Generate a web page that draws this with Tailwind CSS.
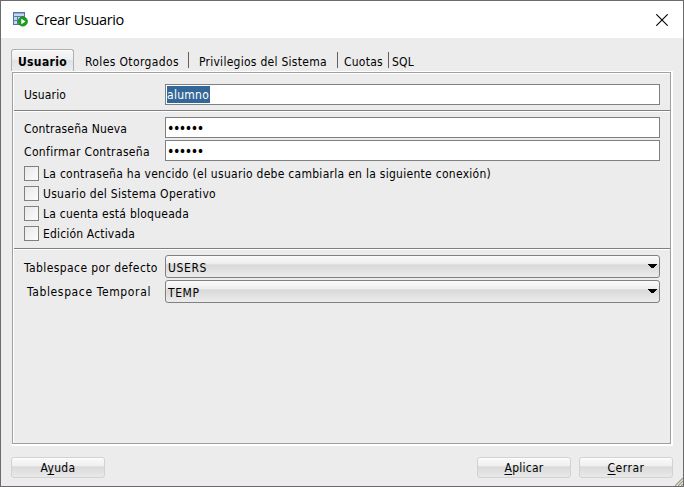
<!DOCTYPE html>
<html lang="es">
<head>
<meta charset="utf-8">
<title>Crear Usuario</title>
<script src="https://cdn.jsdelivr.net/npm/@tailwindcss/browser@4"></script>
</head>
<body class="overflow-hidden">
<div class="relative flex h-[487px] w-[684px] flex-col border border-[#6c6a6c] bg-[#ececec] font-['DejaVu_Sans_Condensed','DejaVu_Sans',sans-serif] text-[12px] leading-[14px] whitespace-nowrap text-black">

  <header class="flex h-[37px] shrink-0 items-center bg-white pl-3 pr-[15px]">
    <svg class="h-4 w-4 shrink-0" viewBox="0 0 16 16">
      <rect x=".5" y=".5" width="11" height="12" fill="#c3d7f0" stroke="#5474a6"/>
      <path d="M1 1.5h10" stroke="#8faedb"/>
      <path d="M0 4.5h12M0 8.5h12M4.5 4v9" stroke="#5b7bad"/>
      <circle cx="9.8" cy="9.5" r="4.6" fill="#1fa01c" stroke="#0e7d12" stroke-width=".8"/>
      <path d="M8.3 6.8v5.4l4.2-2.7z" fill="#fff"/>
    </svg>
    <h1 class="ml-[6px] flex-1 font-['Open_Sans',sans-serif] text-[14.5px] leading-5 tracking-[-0.37px]">Crear Usuario</h1>
    <svg class="h-3 w-3" viewBox="0 0 12 12"><path d="M.3.3l11.4 11.4M11.7.3L.3 11.7" stroke="#000" stroke-width="1.1"/></svg>
  </header>

  <nav class="mt-[11px] ml-[10px] flex h-[22px] shrink-0">
    <div class="flex w-[63px] justify-center rounded-t-[3px] border border-b-0 border-[#aeb0b2] bg-[linear-gradient(#f8f8f8,#efefef_45%,#dfe2e6_50%,#ececec)] pt-[5px] font-bold tracking-[0.35px] shadow-[inset_0_1px_#fff]">Usuario</div>
    <div class="ml-[11px] pt-[6px] tracking-[0.37px]">Roles Otorgados</div>
    <div class="absolute top-[51px] left-[187px] h-4 w-px bg-[#606060]"></div>
    <div class="absolute top-[51px] left-[336px] h-4 w-px bg-[#606060]"></div>
    <div class="absolute top-[51px] left-[387px] h-4 w-px bg-[#606060]"></div>
    <div class="ml-[20px] w-[145px] pt-[6px] tracking-[0.27px]">Privilegios del Sistema</div>
    <div class="w-12 pt-[6px] tracking-[0.25px]">Cuotas</div>
    <div class="pt-[6px] tracking-[0.2px]">SQL</div>
  </nav>

  <main class="ml-[10px] h-[375px] w-[662px] shrink-0 border border-r-2 border-b-2 border-white border-l-[#ececec]">
    <div class="h-[372px] w-[659px] border border-[#a0a0a0]">
      <div class="flex h-full flex-col border-t border-l border-white">
        <div class="mt-[10px] flex h-[21px] pl-[10px]">
          <div class="w-[141px] pt-1 tracking-[0.15px]">Usuario</div>
          <div class="h-[21px] w-[495px] border border-[#808080] bg-white py-px pl-px"><span class="flex h-[17px] w-[43px] items-center bg-[#336699] pt-px tracking-[0.27px] text-white">alumno</span></div>
        </div>
        <div class="mt-[5px] h-[2px] shrink-0 border-t border-b border-t-[#808080] border-b-white"></div>

        <div class="mt-[5px] flex h-[21px] pl-[10px]">
          <div class="w-[141px] pt-[5px] tracking-[0.2px]">Contraseña Nueva</div>
          <div class="h-[21px] w-[495px] border border-[#808080] bg-white pt-[3px] pl-px text-[14px] tracking-[-1.5px]">••••••</div>
        </div>
        <div class="mt-[2px] flex h-[21px] pl-[10px]">
          <div class="w-[141px] pt-[5px] tracking-[0.35px]">Confirmar Contraseña</div>
          <div class="h-[21px] w-[495px] border border-[#808080] bg-white pt-[3px] pl-px text-[14px] tracking-[-1.5px]">••••••</div>
        </div>

        <div class="mt-[5px] flex flex-col gap-[5px] pl-[10px]">
          <div class="flex h-[15px] gap-1"><span class="w-[15px] border border-[#808080] bg-linear-to-br from-[#e8e8e8] to-[#fcfcfc]"></span><span class="pt-px tracking-[0.28px]">La contraseña ha vencido (el usuario debe cambiarla en la siguiente conexión)</span></div>
          <div class="flex h-[15px] gap-1"><span class="w-[15px] border border-[#808080] bg-linear-to-br from-[#e8e8e8] to-[#fcfcfc]"></span><span class="pt-px tracking-[0.29px]">Usuario del Sistema Operativo</span></div>
          <div class="flex h-[15px] gap-1"><span class="w-[15px] border border-[#808080] bg-linear-to-br from-[#e8e8e8] to-[#fcfcfc]"></span><span class="pt-px tracking-[0.25px]">La cuenta está bloqueada</span></div>
          <div class="flex h-[15px] gap-1"><span class="w-[15px] border border-[#808080] bg-linear-to-br from-[#e8e8e8] to-[#fcfcfc]"></span><span class="pt-px tracking-[0.17px]">Edición Activada</span></div>
        </div>
        <div class="mt-[7px] h-[2px] shrink-0 border-t border-b border-t-[#808080] border-b-white"></div>

        <div class="mt-[5px] flex h-[23px] pl-[10px]">
          <div class="w-[141px] pt-[6px] tracking-[0.41px]">Tablespace por defecto</div>
          <div class="flex h-[23px] w-[495px] justify-between rounded-[3px] border border-[#808080] bg-[linear-gradient(#fafafa,#ededed_38%,#d8d8d8_42%,#ececec)] pt-[5px] pr-[2px] pl-[2px] tracking-[0.6px]"><span>USERS</span><svg class="mt-[3px] h-[5px] w-[9px]" viewBox="0 0 9 5" shape-rendering="crispEdges"><path d="M0 0h9v1L5.500 4h-2L0 1z"/></svg></div>
        </div>
        <div class="mt-[2px] flex h-[23px] pl-[10px]">
          <div class="w-[141px] pt-[5px] pl-[3px] tracking-[0.63px]">Tablespace Temporal</div>
          <div class="flex h-[23px] w-[495px] justify-between rounded-[3px] border border-[#808080] bg-[linear-gradient(#fafafa,#ededed_38%,#d8d8d8_42%,#ececec)] pt-[5px] pr-[2px] pl-[2px] tracking-[0.6px]"><span>TEMP</span><svg class="mt-[3px] h-[5px] w-[9px]" viewBox="0 0 9 5" shape-rendering="crispEdges"><path d="M0 0h9v1L5.500 4h-2L0 1z"/></svg></div>
        </div>
      </div>
    </div>
  </main>

  <footer class="mt-[11px] flex h-[21px] shrink-0 pl-[10px]">
    <div class="w-[94px] rounded-[3px] border border-[#d2d2d2] bg-[linear-gradient(#fafafa,#efefef_42%,#dadada_46%,#e9e9e9)] pt-[3px] text-center tracking-[0.3px] shadow-[inset_0_1px_#fdfdfd]">A<span class="underline underline-offset-2">y</span>uda</div>
    <div class="ml-[372px] w-[94px] rounded-[3px] border border-[#d2d2d2] bg-[linear-gradient(#fafafa,#efefef_42%,#dadada_46%,#e9e9e9)] pt-[3px] text-center tracking-[0.25px] shadow-[inset_0_1px_#fdfdfd]"><span class="underline underline-offset-2">A</span>plicar</div>
    <div class="ml-[8px] w-[94px] rounded-[3px] border border-[#d2d2d2] bg-[linear-gradient(#fafafa,#efefef_42%,#dadada_46%,#e9e9e9)] pt-[3px] text-center tracking-[0.5px] shadow-[inset_0_1px_#fdfdfd]"><span class="underline underline-offset-2">C</span>errar</div>
  </footer>

  <svg class="absolute right-0 bottom-0 h-[9px] w-[9px]" viewBox="0 0 9 9">
    <path d="M0 9L9 0v9z" fill="#fff"/>
    <path d="M1 9L9 1M4 9l5-5M7 9l2-2" stroke="#9c9c88" stroke-width="1.4"/>
  </svg>
</div>
</body>
</html>
